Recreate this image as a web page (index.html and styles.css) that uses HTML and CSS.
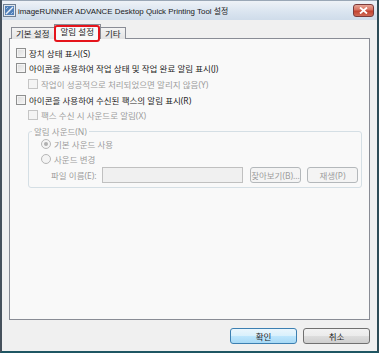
FILE: index.html
```html
<!DOCTYPE html>
<html lang="ko">
<head>
    <meta charset="UTF-8">
    <title>imageRUNNER ADVANCE Desktop Quick Printing Tool 설정</title>
    <link rel="stylesheet" href="styles.css">
</head>
<body>
    <div class="window">
        <div class="titlebar">
            <svg class="app-icon" width="13" height="13" viewBox="0 0 13 13">
                <rect x="0.5" y="0.5" width="12" height="12" fill="#dfe6ee" stroke="#6f7f92"/>
                <rect x="2" y="2" width="9" height="9" fill="#4f7fb8"/>
                <path d="M3 10 L10 3" stroke="#e8eef6" stroke-width="1.5"/>
                <path d="M3 5 L5 3 M8 10 L10 8" stroke="#9fc0e4" stroke-width="1"/>
            </svg>
            <span class="title">imageRUNNER ADVANCE Desktop Quick Printing Tool 설정</span>
            <div class="close-btn">
                <svg width="9" height="7" viewBox="0 0 9 7">
                    <path d="M1 0.5 L8 6.5 M8 0.5 L1 6.5" stroke="#fff" stroke-width="1.8"/>
                </svg>
            </div>
        </div>

        <div class="content">
            <div class="tabs">
                <div class="tab">기본 설정</div>
                <div class="tab active">알림 설정</div>
                <div class="tab">기타</div>
                <div class="tab-mark"></div>
            </div>

            <div class="panel">
                <div class="row">
                    <span class="check"></span>장치 상태 표시(S)
                </div>
                <div class="row">
                    <span class="check"></span>아이콘을 사용하여 작업 상태 및 작업 완료 알림 표시(J)
                </div>
                <div class="row sub disabled">
                    <span class="check"></span>작업이 성공적으로 처리되었으면 알리지 않음(Y)
                </div>
                <div class="row">
                    <span class="check"></span>아이콘을 사용하여 수신된 팩스의 알림 표시(R)
                </div>
                <div class="row sub disabled">
                    <span class="check"></span>팩스 수신 시 사운드로 알림(X)
                </div>

                <fieldset class="group disabled">
                    <legend>알림 사운드(N)</legend>
                    <div class="row">
                        <span class="radio selected"></span>기본 사운드 사용
                    </div>
                    <div class="row">
                        <span class="radio"></span>사운드 변경
                    </div>
                    <div class="file-row">
                        <span class="file-label">파일 이름(E):</span>
                        <div class="file-input"></div>
                        <div class="btn small">찾아보기(B)...</div>
                        <div class="btn small">재생(P)</div>
                    </div>
                </fieldset>
            </div>

            <div class="buttons">
                <div class="btn primary">확인</div>
                <div class="btn">취소</div>
            </div>
        </div>
    </div>
</body>
</html>
```

FILE: styles.css
```css
* {
    margin: 0;
    padding: 0;
    box-sizing: border-box;
}

body {
    width: 379px;
    height: 353px;
    overflow: hidden;
    background: #f0f0f0;
    font-family: "Noto Sans", "Noto Sans CJK KR", sans-serif;
    font-size: 8.5px;
    color: #1e1e1e;
}

.window {
    width: 379px;
    height: 353px;
    display: flex;
    flex-direction: column;
    border-left: 2px solid #46515c;
    border-right: 2px solid #2e4c57;
    border-bottom: 2px solid #1e5663;
    background: #f0f0f0;
}

/* Title bar */
.titlebar {
    height: 20px;
    display: flex;
    align-items: center;
    padding: 0 3px 0 1px;
    background: linear-gradient(#eef2f7 0%, #dbe5f0 55%, #cfdcea 100%);
    border-top: 1px solid #9aa7b6;
}

.app-icon {
    flex: none;
    margin-right: 2px;
}

.title {
    flex: 1;
    font-family: "Liberation Sans", "Noto Sans CJK KR", sans-serif;
    font-size: 7.9px;
    color: #1a1a1a;
    white-space: nowrap;
}

.close-btn {
    width: 21px;
    height: 13px;
    display: flex;
    align-items: center;
    justify-content: center;
    border: 1px solid #7a3b3b;
    border-radius: 3px;
    background: linear-gradient(#e8a596 0%, #d6705f 45%, #c2412e 55%, #cf6a55 100%);
}

/* Content */
.content {
    flex: 1;
    display: flex;
    flex-direction: column;
    padding: 4px 7px 7px 7px;
}

.tabs {
    position: relative;
    display: flex;
    align-items: flex-end;
    height: 15px;
    padding-left: 2px;
    margin-bottom: -1px;
}

.tab {
    height: 12px;
    padding: 0 4px;
    line-height: 11px;
    border: 1px solid #898c95;
    border-bottom: none;
    border-right: none;
    background: linear-gradient(#f3f3f3, #e3e3e3);
    color: #1e1e1e;
}

.tab:nth-child(3) {
    border-right: 1px solid #898c95;
}

.tab.active {
    height: 15px;
    line-height: 14px;
    padding: 0 6px;
    background: #f9f9f9;
    border-right: 1px solid #898c95;
    position: relative;
    z-index: 1;
}

.tab.active + .tab {
    border-left: none;
}

.tab-mark {
    position: absolute;
    left: 45px;
    top: 1px;
    width: 46px;
    height: 17px;
    border: 2px solid #e5141b;
    border-radius: 3px;
    z-index: 2;
}

.panel {
    flex: 1;
    background: #f9f9f9;
    border: 1px solid #898c95;
    padding: 6px 8px 0 6px;
}

.row {
    display: flex;
    align-items: center;
    height: 15.6px;
    white-space: nowrap;
}

.row.sub {
    padding-left: 12px;
}

.disabled,
.disabled legend {
    color: #9c9c9c;
}

.check {
    width: 10px;
    height: 10px;
    margin-right: 3px;
    border: 1px solid #8e8f8f;
    background: linear-gradient(135deg, #dcdcdc, #f6f6f6);
    box-shadow: inset 0 0 0 1px #f4f4f4;
}

.disabled .check {
    border-color: #c5c5c5;
    background: #f4f4f4;
}

.radio {
    width: 10px;
    height: 10px;
    margin-right: 3px;
    border: 1px solid #b6b6b6;
    border-radius: 50%;
    background: #f4f4f4;
    display: flex;
    align-items: center;
    justify-content: center;
}

.radio.selected::after {
    content: "";
    width: 4px;
    height: 4px;
    border-radius: 50%;
    background: #b0b0b0;
}

/* Group box */
.group {
    margin: 5px 0 0 12px;
    border: 1px solid #d5dfe5;
    border-radius: 3px;
    padding: 0 3px 4px 12px;
}

.group legend {
    margin-left: -9px;
    padding: 0 2px;
    line-height: 8px;
}

.file-row {
    display: flex;
    align-items: center;
    height: 16px;
}

.file-label {
    width: 61px;
    padding-left: 10px;
    white-space: nowrap;
}

.file-input {
    width: 141px;
    height: 16px;
    border: 1px solid #c0c0c0;
    background: #f0f0f0;
    margin-right: 7px;
}

.btn {
    width: 67px;
    height: 16px;
    display: flex;
    align-items: center;
    justify-content: center;
    border: 1px solid #707070;
    border-radius: 3px;
    background: linear-gradient(#f2f2f2 0%, #ebebeb 50%, #dddddd 51%, #cfcfcf 100%);
    color: #1e1e1e;
    white-space: nowrap;
}

.btn.small {
    width: 51px;
    margin-right: 6px;
    border-color: #b4b8bb;
    background: #f4f4f4;
    color: #9c9c9c;
}

.btn.small:last-child {
    margin-right: 0;
}

.buttons {
    display: flex;
    justify-content: flex-end;
    gap: 6px;
    margin-top: 8px;
}

.btn.primary {
    border-color: #3c7fb1;
    background: linear-gradient(#eaf6fd 0%, #d9f0fc 50%, #bee6fd 51%, #a7d9f5 100%);
}
```
